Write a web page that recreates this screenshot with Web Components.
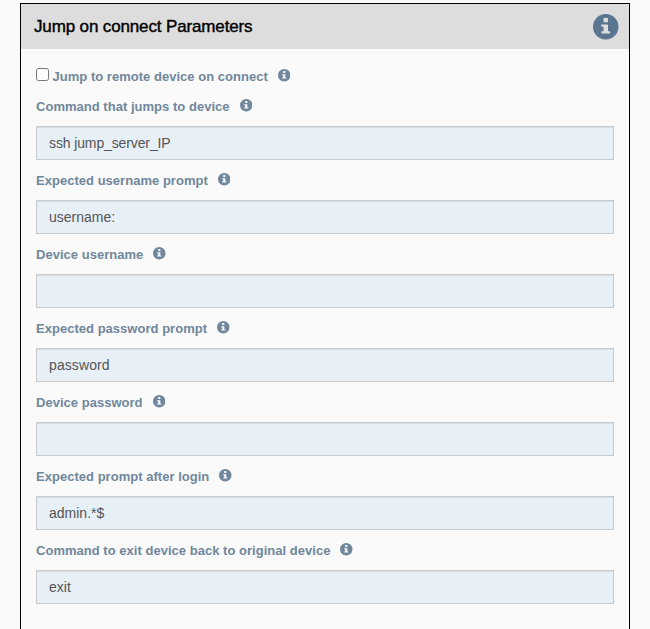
<!DOCTYPE html>
<html lang="en">
<head>
<meta charset="utf-8">
<title>Jump on connect Parameters</title>
<style>
html, body { height: 100%; }
body { margin: 0; background: #fafafa; font-family: "Liberation Sans", Arial, sans-serif; overflow: hidden; }
</style>
</head>
<body>
<settings-panel>
  <span slot="title">Jump on connect Parameters</span>
  <check-field><field-label>Jump to remote device on connect</field-label></check-field>
  <text-field value="ssh jump_server_IP" style="--tracking:-.12px"><field-label>Command that jumps to device</field-label></text-field>
  <text-field value="username:"><field-label>Expected username prompt</field-label></text-field>
  <text-field><field-label>Device username</field-label></text-field>
  <text-field value="password" style="--tracking:.1px"><field-label>Expected password prompt</field-label></text-field>
  <text-field><field-label>Device password</field-label></text-field>
  <text-field value="admin.*$"><field-label>Expected prompt after login</field-label></text-field>
  <text-field value="exit"><field-label>Command to exit device back to original device</field-label></text-field>
</settings-panel>
<script>
const define = (name, html, setup) => {
  const template = document.createElement('template');
  template.innerHTML = html;
  customElements.define(name, class extends HTMLElement {
    constructor() {
      super();
      this.attachShadow({ mode: 'open' }).append(template.content.cloneNode(true));
    }
    connectedCallback() { if (setup) setup(this); }
  });
};

define('info-icon', `
<style>
:host { display: block; flex: none; width: var(--icon-size, 12.5px); height: var(--icon-size, 12.5px); }
svg { display: block; width: 100%; height: 100%; fill: currentColor; }
</style>
<svg viewBox="23 23 1154 1154" aria-hidden="true"><path fill-rule="evenodd" transform="translate(0 1200) scale(1 -1)" d="M23 600a577 577 0 1 0 1154 0a577 577 0 1 0 -1154 0zM675 1000h-150q-10 0 -17.5 -7.5t-7.5 -17.5v-150q0 -10 7.5 -17.5t17.5 -7.5h150q10 0 17.5 7.5t7.5 17.5v150q0 10 -7.5 17.5t-17.5 7.5zM675 700h-250q-10 0 -17.5 -7.5t-7.5 -17.5v-50q0 -10 7.5 -17.5t17.5 -7.5h75v-200h-75q-10 0 -17.5 -7.5t-7.5 -17.5v-50q0 -10 7.5 -17.5t17.5 -7.5h350q10 0 17.5 7.5t7.5 17.5v50q0 10 -7.5 17.5t-17.5 7.5h-75v275q0 10 -7.5 17.5t-17.5 7.5z"/></svg>`);

define('field-label', `
<style>
:host { display: flex; align-items: center; gap: 10px; height: 20px; font-weight: 700; font-size: 13px; line-height: 20px; letter-spacing: .025px; color: #70879c; white-space: nowrap; }
span { padding-top: 2px; }
info-icon { margin-bottom: 1.5px; }
</style>
<span><slot></slot></span><info-icon></info-icon>`);

define('check-field', `
<style>
:host { display: flex; align-items: center; gap: 3.5px; height: 20px; margin-bottom: 10px; }
input { box-sizing: border-box; width: 13px; height: 13px; margin: 0 0 4px; }
</style>
<input type="checkbox"><slot></slot>`);

define('text-field', `
<style>
:host { display: block; margin-bottom: 10px; }
input { display: block; box-sizing: border-box; width: 100%; height: 34px; margin: 10px 0 0; padding: 6px 12px; border: 1px solid #c8cacc; border-radius: 0; background: #e7eff7; box-shadow: inset 0 1px 1px rgba(0,0,0,.075); color: #555; font: 14px/20px "Liberation Sans", Arial, sans-serif; letter-spacing: var(--tracking, 0); outline: none; }
</style>
<slot></slot><input type="text">`, host => {
  host.shadowRoot.querySelector('input').value = host.getAttribute('value') || '';
});

define('settings-panel', `
<style>
:host { display: block; box-sizing: border-box; width: 610px; height: 640px; margin: 3px 0 0 20px; border: 1px solid #000; }
header { display: flex; align-items: center; justify-content: space-between; height: 45px; padding: 1px 10.5px 0 13px; background: #ddd; box-sizing: border-box; --icon-size: 25.5px; }
h2 { margin: 0; font-size: 17px; font-weight: 400; line-height: 20px; letter-spacing: -.14px; color: #000; -webkit-text-stroke: .4px #000; }
info-icon { color: #5a7590; }
section { padding: 17px 15px 0; }
</style>
<header><h2><slot name="title"></slot></h2><info-icon></info-icon></header>
<section><slot></slot></section>`);
</script>
</body>
</html>
